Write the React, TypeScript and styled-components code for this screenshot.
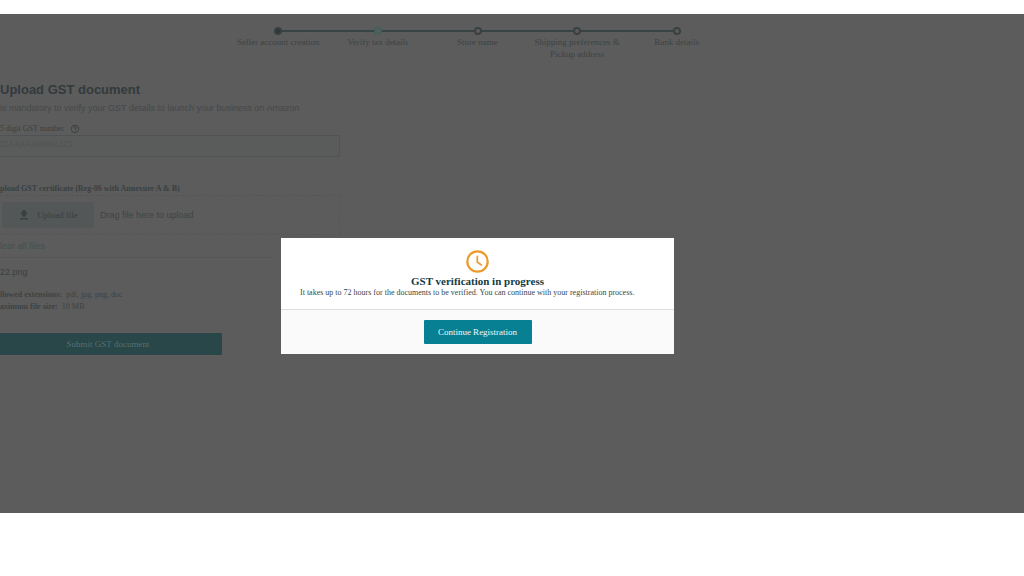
import React from "react";
import styled, { createGlobalStyle } from "styled-components";
import { MdHelpOutline } from "react-icons/md";

const sans = `"Liberation Sans", Arial, sans-serif`;
const serif = `"Liberation Serif", "Times New Roman", serif`;

const GlobalStyle = createGlobalStyle`
  *, *::before, *::after { box-sizing: border-box; }
  body { margin: 0; background: #ffffff; }
  h1, h2, p, ol, dl, dd, dt { margin: 0; padding: 0; }
  button, input { font: inherit; }
`;

const Page = styled.main`
  position: relative;
  margin: 14px 0 63px;
  padding: 12px 69px 158px 0;
  background: #5c5c5c;
  font-family: ${serif};
  font-size: 9px;
  line-height: 12px;
  color: #3d4343;
`;

const Stepper = styled.ol`
  display: grid;
  grid-template-columns: repeat(5, 1fr);
  max-width: 498px;
  margin: 0 auto;
  list-style: none;
`;

const Step = styled.li`
  display: flex;
  flex-direction: column;
  align-items: center;
  text-align: center;
`;

const Track = styled.div<{ $start?: boolean; $end?: boolean }>`
  display: flex;
  align-items: center;
  align-self: stretch;
  height: 10px;

  &::before,
  &::after {
    content: "";
    flex: 1;
    height: 2px;
    background: #374443;
  }
  &::before { visibility: ${(p) => (p.$start ? "hidden" : "visible")}; }
  &::after { visibility: ${(p) => (p.$end ? "hidden" : "visible")}; }
`;

const Dot = styled.span<{ $state: "done" | "current" | "todo" }>`
  width: 8px;
  height: 8px;
  border-radius: 50%;
  border: 2px solid ${(p) => (p.$state === "current" ? "#3f625d" : "#3a4040")};
  background: ${(p) => (p.$state === "done" ? "#2e3737" : "#5c5c5c")};
`;

const StepLabel = styled.span`
  max-width: 86px;
`;

const Form = styled.form`
  max-width: 340px;
  margin-top: 22px;
`;

const Title = styled.h1`
  font: bold 13px/16px ${sans};
  color: #333a3c;
`;

const Intro = styled.p`
  margin-top: 4px;
  font: 9px/12px ${sans};
  color: #464848;
`;

const FieldLabel = styled.label<{ $bold?: boolean }>`
  display: flex;
  align-items: center;
  gap: 6px;
  font-weight: ${(p) => (p.$bold ? "bold" : "normal")};
  font-size: 8px;
  color: #3a4040;

  svg { font-size: 10px; }
`;

const NumberField = styled.div`
  margin-top: 9px;
`;

const NumberInput = styled.input`
  display: block;
  width: 100%;
  height: 22px;
  padding: 0 0 4px;
  border: 1px solid #4f5353;
  border-left: 0;
  background: #5a5b5b;
  color: #4f5252;
  font-size: 8px;
`;

const UploadField = styled.div`
  margin-top: 26px;
`;

const DropZone = styled.div`
  display: flex;
  align-items: center;
  gap: 6px;
  height: 40px;
  padding: 0 2px;
  border: 1px dashed #535757;
  border-left: 0;
  font: 9px/12px ${sans};
  color: #3e4545;
`;

const UploadButton = styled.button`
  display: flex;
  align-items: center;
  justify-content: center;
  gap: 7px;
  width: 92px;
  height: 26px;
  padding: 0;
  border: 0;
  border-radius: 2px;
  background: #545757;
  color: #384040;
  font: 9px/12px ${serif};
`;

const ClearRow = styled.div`
  width: 273px;
  padding: 5px 0;
  border-bottom: 1px solid #545757;
  font: 9px/12px ${sans};
`;

const ClearLink = styled.a`
  color: #415251;
  text-decoration: none;
`;

const FileName = styled.p`
  margin-top: 8px;
  font: 9px/12px ${sans};
  color: #3a4040;
`;

const Limits = styled.dl`
  margin-top: 11px;
  font-size: 8px;
`;

const Limit = styled.div`
  display: flex;
  gap: 4px;

  dt { font-weight: bold; }
`;

const SubmitButton = styled.button`
  display: block;
  width: 222px;
  height: 22px;
  margin-top: 20px;
  padding: 0 6px 0 0;
  border: 0;
  border-radius: 1px;
  background: #294648;
  color: #56706f;
  font-size: 9px;
`;

const Overlay = styled.div`
  position: absolute;
  inset: 0 69px 0 0;
  display: flex;
  justify-content: center;
  align-items: flex-start;
  padding-top: 224px;
`;

const Dialog = styled.section`
  width: 393px;
  background: #ffffff;
`;

const DialogBody = styled.div`
  display: flex;
  flex-direction: column;
  align-items: center;
  padding: 12px 19px 10px;
  color: #35494b;
`;

const DialogTitle = styled.h2`
  margin-top: 2px;
  font-size: 11px;
  line-height: 12px;
  color: #153a40;
`;

const DialogText = styled.p`
  align-self: stretch;
  font-size: 8px;
`;

const DialogFooter = styled.div`
  display: flex;
  justify-content: center;
  padding: 10px 16px;
  border-top: 1px solid #dcdfdf;
  background: #fafafa;
`;

const ContinueButton = styled.button`
  width: 108px;
  height: 24px;
  padding: 0;
  border: 0;
  border-radius: 1px;
  background: #078093;
  color: #eef9fa;
  font-size: 9px;
`;

const steps = [
  { label: "Seller account creation", state: "done" },
  { label: "Verify tax details", state: "current" },
  { label: "Store name", state: "todo" },
  { label: "Shipping preferences & Pickup address", state: "todo" },
  { label: "Bank details", state: "todo" },
] as const;

const UploadIcon = () => (
  <svg width="12" height="12" viewBox="0 0 24 24" fill="currentColor" aria-hidden="true">
    <path d="M8 15h8V9h4l-8-8-8 8h4zM4 18h16v3H4z" />
  </svg>
);

const ClockIcon = () => (
  <svg width="23" height="23" viewBox="0 0 23 23" fill="none" stroke="#ec9a2b" aria-hidden="true">
    <circle cx="11.5" cy="11.5" r="10.2" strokeWidth="2.2" />
    <path d="M11.3 5.8v6.2l4.6 3.4" strokeWidth="1.7" />
  </svg>
);

export default function App() {
  return (
    <>
      <GlobalStyle />
      <Page>
        <Stepper>
          {steps.map((step, i) => (
            <Step key={step.label}>
              <Track $start={i === 0} $end={i === steps.length - 1}>
                <Dot $state={step.state} />
              </Track>
              <StepLabel>{step.label}</StepLabel>
            </Step>
          ))}
        </Stepper>

        <Form onSubmit={(e) => e.preventDefault()}>
          <Title>Upload GST document</Title>
          <Intro>is mandatory to verify your GST details to launch your business on Amazon</Intro>

          <NumberField>
            <FieldLabel htmlFor="gst-number">
              5 digit GST number <MdHelpOutline aria-hidden="true" />
            </FieldLabel>
            <NumberInput id="gst-number" defaultValue="22AAAAA0000A1Z5" />
          </NumberField>

          <UploadField>
            <FieldLabel htmlFor="gst-upload" $bold>
              pload GST certificate (Reg-06 with Annexure A &amp; B)
            </FieldLabel>
            <DropZone>
              <UploadButton id="gst-upload" type="button">
                <UploadIcon /> Upload file
              </UploadButton>
              Drag file here to upload
            </DropZone>
          </UploadField>
          <ClearRow>
            <ClearLink href="#clear">lear all files</ClearLink>
          </ClearRow>
          <FileName>22.png</FileName>
          <Limits>
            <Limit>
              <dt>llowed extensions:</dt>
              <dd>pdf, jpg, png, doc</dd>
            </Limit>
            <Limit>
              <dt>aximum file size:</dt>
              <dd>10 MB</dd>
            </Limit>
          </Limits>
          <SubmitButton type="submit">Submit GST document</SubmitButton>
        </Form>

        <Overlay>
          <Dialog role="dialog" aria-labelledby="dialog-title">
            <DialogBody>
              <ClockIcon />
              <DialogTitle id="dialog-title">GST verification in progress</DialogTitle>
              <DialogText>
                It takes up to 72 hours for the documents to be verified. You can continue with your
                registration process.
              </DialogText>
            </DialogBody>
            <DialogFooter>
              <ContinueButton type="button">Continue Registration</ContinueButton>
            </DialogFooter>
          </Dialog>
        </Overlay>
      </Page>
    </>
  );
}
